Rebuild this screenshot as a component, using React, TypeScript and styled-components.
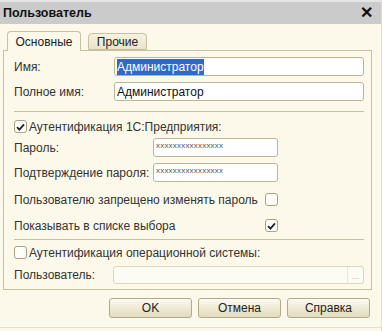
import * as React from "react";
import styled, { createGlobalStyle } from "styled-components";

const GlobalStyle = createGlobalStyle`
  html, body {
    margin: 0;
    padding: 0;
    background: #ffffff;
  }
  body {
    font-family: "Liberation Sans", Arial, sans-serif;
    font-size: 12px;
    color: #2b2b2b;
  }
`;

const tan = "#c8c19f";

const StyledWindow = styled.div`
  width: 382px;
  height: 331px;
  display: flex;
  flex-direction: column;
  background: #fcf9ea;
  box-sizing: border-box;
  border-right: 1px solid #e4e0cc;
  overflow: hidden;
`;

const StyledTitleBar = styled.div`
  height: 24px;
  flex: none;
  display: flex;
  align-items: center;
  justify-content: space-between;
  padding: 0 8px 0 3px;
  box-sizing: border-box;
  background: #cbcbcb;
  border-top: 2px solid #e6e6e6;
  font-weight: bold;
  font-size: 12.5px;
  color: #111;
`;

const StyledClose = styled.span`
  font-size: 16px;
  font-weight: bold;
  line-height: 1;
`;

const StyledBody = styled.div`
  padding: 7px 10px 0 3px;
  display: flex;
  flex-direction: column;
`;

const StyledTabs = styled.div`
  display: flex;
  align-items: flex-end;
  gap: 7px;
  padding-left: 4px;
  height: 19px;
`;

const StyledTab = styled.div<{ $active?: boolean }>`
  box-sizing: border-box;
  width: ${p => (p.$active ? 74 : 59)}px;
  height: ${p => (p.$active ? 20 : 17)}px;
  margin-bottom: ${p => (p.$active ? -1 : 0)}px;
  display: flex;
  align-items: center;
  justify-content: center;
  border: 1px solid ${tan};
  border-bottom: ${p => (p.$active ? "none" : `1px solid ${tan}`)};
  border-radius: 4px 4px 0 0;
  background: ${p =>
    p.$active ? "#fcf9ea" : "linear-gradient(#f6f2df, #e9e3c8)"};
  font-size: 12px;
  color: #222;
  position: relative;
  z-index: ${p => (p.$active ? 1 : 0)};
`;

const StyledPanel = styled.div`
  box-sizing: border-box;
  width: 369px;
  height: 240px;
  border: 1px solid ${tan};
  padding: 0 7px 0 10px;
  display: flex;
  flex-direction: column;
`;

const StyledRow = styled.div<{ $top: number; $h?: number }>`
  display: flex;
  align-items: center;
  margin-top: ${p => p.$top}px;
  height: ${p => p.$h ?? 19}px;
`;

const StyledLabel = styled.span<{ $w: number }>`
  width: ${p => p.$w}px;
  flex: none;
  color: #333;
  white-space: nowrap;
`;

const StyledInput = styled.div<{ $w?: number; $disabled?: boolean }>`
  box-sizing: border-box;
  height: 100%;
  width: ${p => (p.$w ? `${p.$w}px` : "auto")};
  flex: ${p => (p.$w ? "none" : "1")};
  border: 1px solid ${p => (p.$disabled ? "#dcd6bb" : "#bdb591")};
  border-radius: 3px;
  background: ${p => (p.$disabled ? "#fdfcf4" : "#ffffff")};
  display: flex;
  align-items: center;
  padding-left: 2px;
  color: #111;
  overflow: hidden;
`;

const StyledSelected = styled.span`
  background: #3169c6;
  color: #fff;
  padding: 1px 0;
`;

const StyledMask = styled.span`
  font-size: 8px;
  color: #555;
  letter-spacing: 0.2px;
  margin-top: -5px;
`;

const StyledDots = styled.span`
  margin-left: auto;
  width: 16px;
  height: 100%;
  border-left: 1px solid #ebe6d2;
  color: #b9b39a;
  font-size: 9px;
  display: flex;
  align-items: flex-end;
  justify-content: center;
  padding-bottom: 2px;
  box-sizing: border-box;
`;

const StyledSeparator = styled.div<{ $top: number }>`
  margin-top: ${p => p.$top}px;
  height: 1px;
  background: ${tan};
`;

const StyledCheck = styled.span`
  box-sizing: border-box;
  width: 13px;
  height: 13px;
  flex: none;
  border: 1px solid #a9a17f;
  border-radius: 3px;
  background: #fffef8;
  display: flex;
  align-items: center;
  justify-content: center;
`;

const StyledCheckText = styled.span`
  margin-left: 2px;
  color: #333;
  white-space: nowrap;
`;

const StyledButtons = styled.div`
  display: flex;
  justify-content: flex-end;
  gap: 6px;
  margin-top: 8px;
  padding-right: 1px;
`;

const StyledButton = styled.div`
  box-sizing: border-box;
  width: 83px;
  height: 20px;
  border: 1px solid #b3ab88;
  border-radius: 3px;
  background: linear-gradient(#fdfbf1, #ece7cf 60%, #e2dcbf);
  display: flex;
  align-items: center;
  justify-content: center;
  color: #222;
`;

const StyledFooterLine = styled.div`
  margin-top: 9px;
  margin-left: -3px;
  margin-right: -10px;
  height: 1px;
  background: #dedede;
`;

const Tick = () => (
  <svg width="9" height="8" viewBox="0 0 9 8">
    <path
      d="M1 4.2 L3.4 6.6 L8 1.4"
      fill="none"
      stroke="#222"
      strokeWidth="1.8"
    />
  </svg>
);

const CheckBox = ({ checked }: { checked?: boolean }) => (
  <StyledCheck>{checked && <Tick />}</StyledCheck>
);

const App = () => (
  <>
    <GlobalStyle />
    <StyledWindow>
      <StyledTitleBar>
        <span>Пользователь</span>
        <StyledClose>✕</StyledClose>
      </StyledTitleBar>
      <StyledBody>
        <StyledTabs>
          <StyledTab $active>Основные</StyledTab>
          <StyledTab>Прочие</StyledTab>
        </StyledTabs>
        <StyledPanel>
          <StyledRow $top={6}>
            <StyledLabel $w={100}>Имя:</StyledLabel>
            <StyledInput>
              <StyledSelected>Администратор</StyledSelected>
            </StyledInput>
          </StyledRow>
          <StyledRow $top={6}>
            <StyledLabel $w={100}>Полное имя:</StyledLabel>
            <StyledInput>Администратор</StyledInput>
          </StyledRow>
          <StyledSeparator $top={10} />
          <StyledRow $top={8} $h={13}>
            <CheckBox checked />
            <StyledCheckText>Аутентификация 1С:Предприятия:</StyledCheckText>
          </StyledRow>
          <StyledRow $top={5}>
            <StyledLabel $w={139}>Пароль:</StyledLabel>
            <StyledInput $w={125}>
              <StyledMask>xxxxxxxxxxxxxxxx</StyledMask>
            </StyledInput>
          </StyledRow>
          <StyledRow $top={6}>
            <StyledLabel $w={139}>Подтверждение пароля:</StyledLabel>
            <StyledInput $w={125}>
              <StyledMask>xxxxxxxxxxxxxxxx</StyledMask>
            </StyledInput>
          </StyledRow>
          <StyledRow $top={8}>
            <StyledLabel $w={251}>
              Пользователю запрещено изменять пароль
            </StyledLabel>
            <CheckBox />
          </StyledRow>
          <StyledRow $top={7}>
            <StyledLabel $w={251}>Показывать в списке выбора</StyledLabel>
            <CheckBox checked />
          </StyledRow>
          <StyledSeparator $top={4} />
          <StyledRow $top={6} $h={13}>
            <CheckBox />
            <StyledCheckText>
              Аутентификация операционной системы:
            </StyledCheckText>
          </StyledRow>
          <StyledRow $top={7} $h={18}>
            <StyledLabel $w={99}>Пользователь:</StyledLabel>
            <StyledInput $disabled>
              <StyledDots>...</StyledDots>
            </StyledInput>
          </StyledRow>
        </StyledPanel>
        <StyledButtons>
          <StyledButton>OK</StyledButton>
          <StyledButton>Отмена</StyledButton>
          <StyledButton>Справка</StyledButton>
        </StyledButtons>
        <StyledFooterLine />
      </StyledBody>
    </StyledWindow>
  </>
);

export default App;
